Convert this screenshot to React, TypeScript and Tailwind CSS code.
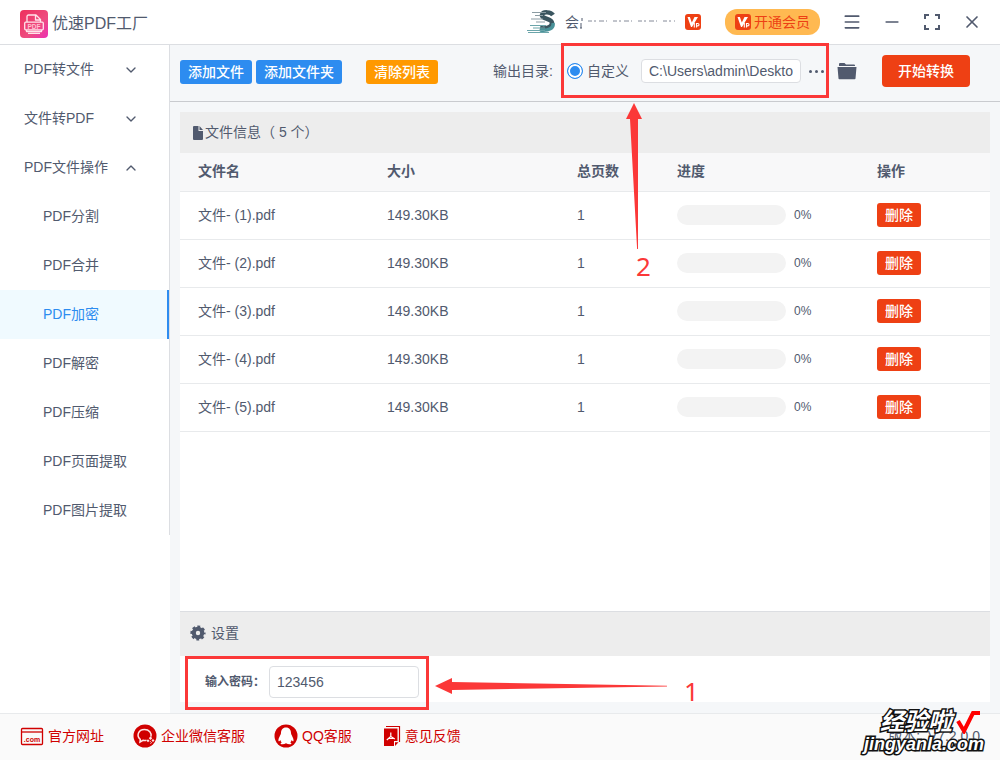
import React, { useState } from 'react';
import { ChevronDown, ChevronUp, Menu, Minus, X } from 'lucide-react';

interface FileItem {
  id: number;
  name: string;
  size: string;
  pages: number;
  progress: number;
}

const initialFiles: FileItem[] = [1, 2, 3, 4, 5].map(n => ({
  id: n,
  name: `文件- (${n}).pdf`,
  size: '149.30KB',
  pages: 1,
  progress: 0,
}));

const groups = [
  { label: 'PDF转文件', open: false },
  { label: '文件转PDF', open: false },
  { label: 'PDF文件操作', open: true },
];

const operations = ['PDF分割', 'PDF合并', 'PDF加密', 'PDF解密', 'PDF压缩', 'PDF页面提取', 'PDF图片提取'];

const Logo = () => (
  <svg className="w-7 h-7" viewBox="0 0 28 28" fill="none">
    <defs>
      <linearGradient id="logo" x1="0" y1="0" x2="1" y2="1">
        <stop offset="0" stopColor="#ee2f5b" />
        <stop offset="0.6" stopColor="#ee4c80" />
        <stop offset="1" stopColor="#ec2fb4" />
      </linearGradient>
    </defs>
    <rect width="28" height="28" rx="4" fill="url(#logo)" />
    <g stroke="#ffe3ea" strokeWidth="1.3" strokeLinejoin="round">
      <path d="M7 12V6.5A1.5 1.5 0 0 1 8.500 5H16l4.500 4.500V12M15.500 5v5h5" />
      <rect x="4.700" y="12.200" width="18.600" height="7.600" rx="1" />
      <path d="M6.500 20v1.500h15V20M8 23.300h12" />
    </g>
    <text x="14" y="18.700" textAnchor="middle" fontSize="6.500" fontWeight="700" fill="#ffc2d2" fontFamily="Liberation Sans">PDF</text>
  </svg>
);

const Avatar = () => (
  <svg className="w-7 h-6" viewBox="0 0 28 24" fill="none">
    <path d="M26 5c-2-3-10-4-11 0-1 4 10 3 10 8 0 5-7 6-12 5" stroke="#3b5660" strokeWidth="4.500" />
    <path d="M26 13c1 5-4 8-13 7" stroke="#4a9299" strokeWidth="3.500" />
    <path d="M5 2.500h14M8 5.500h8M4 9h12M9 12h9" stroke="#8b9ca3" strokeWidth="1.200" />
    <path d="M3 15.500h16M6 18h12M0 20.500h18M1 22.500h21" stroke="#6ba5aa" strokeWidth="1.200" />
  </svg>
);

const VipIcon = () => (
  <svg className="w-4 h-4 shrink-0" viewBox="0 0 16 16" fill="none">
    <rect width="16" height="16" rx="3" fill="#ee4014" />
    <path d="M2.500 3h2.400l1.900 5.500L9.500 3h3.500L7 13H6z" fill="#fff" />
    <path d="M9.300 9v4.500M11.500 13.500V9.500h1.300a1.200 1.200 0 0 1 0 2.400h-1.300" stroke="#fff" strokeWidth="1.100" />
  </svg>
);

const FullscreenIcon = () => (
  <svg className="w-4 h-4" viewBox="0 0 16 16" fill="none" stroke="currentColor" strokeWidth="2">
    <path d="M1 5V1h4M11 1h4v4M15 11v4h-4M5 15H1v-4" />
  </svg>
);

const FileIcon = () => (
  <svg className="w-3 h-3.5" viewBox="0 0 12 14" fill="currentColor">
    <path d="M2 0h4.500v5H11v8a1 1 0 0 1-1 1H2a1 1 0 0 1-1-1V1a1 1 0 0 1 1-1zM7.500 0 11 4H7.500z" />
  </svg>
);

const GearIcon = () => (
  <svg className="w-4 h-4" viewBox="0 0 16 16" fill="none" stroke="currentColor">
    <circle cx="8" cy="8" r="4.200" strokeWidth="4" />
    <circle cx="8" cy="8" r="6.400" strokeWidth="2.400" strokeDasharray="2.800 2.226" strokeDashoffset="1.400" />
  </svg>
);

const FolderIcon = () => (
  <svg className="w-5 h-[18px]" viewBox="0 0 20 18" fill="currentColor">
    <path d="M2 4V2a1 1 0 0 1 1-1h4.500l1.500 1.500h8a1 1 0 0 1 1 1V4z" />
    <path d="M.500 5h19L18.500 16.500a.8.8 0 0 1-.8.700H2.300a.8.8 0 0 1-.8-.700z" />
  </svg>
);

const SiteIcon = () => (
  <svg className="w-6 h-6" viewBox="0 0 24 24" fill="none" stroke="#d00000">
    <rect x="1.500" y="4.500" width="21" height="16" rx="1" strokeWidth="1.300" />
    <path d="M1.500 8h21" strokeWidth="1.300" />
    <text x="12" y="17.800" textAnchor="middle" fontSize="7" fontWeight="700" fill="#d00000" stroke="none" fontFamily="Liberation Sans">.com</text>
  </svg>
);

const WechatIcon = () => (
  <svg className="w-6 h-6" viewBox="0 0 24 24" fill="none">
    <circle cx="12" cy="12" r="11.500" fill="#d00000" />
    <path d="M13.500 16.200a8 8 0 0 1-3.500.1L7 18l.3-2.700C3.300 12.500 4.800 5.500 11.500 5.500c4.800 0 7.300 3.500 6.500 7" stroke="#ffe5e5" strokeWidth="1.500" />
    <path d="m17.500 12.300 1.700 1.900-1.700 1.900-1.700-1.900zM15 15.200l1.500 1.500-1.500 1.500-1.500-1.500zM20 15l1.500 1.500L20 18l-1.500-1.500z" fill="#ffe5e5" />
    <path d="m17 17.200 1.500 1.500-1 1" stroke="#ffe5e5" />
  </svg>
);

const QQIcon = () => (
  <svg className="w-6 h-6" viewBox="0 0 24 24" fill="none">
    <circle cx="12" cy="12" r="11.500" fill="#d00000" />
    <path d="M12 3.500c-3.500 0-5 2.500-5 5.500 0 2-3 5-2.500 8 .3 1 1.300-.3 1.800-1 .2 1 .7 1.800 1.400 2.400-1.200.4-1.700 1.600-.2 1.800 1.500.2 3.200-.1 4.500-.9 1.300.8 3 1.100 4.500.9 1.500-.2 1-1.400-.2-1.800.7-.6 1.200-1.400 1.400-2.400.5.7 1.500 2 1.800 1 .5-3-2.500-6-2.500-8 0-3-1.500-5.500-5-5.500z" fill="#fff" />
  </svg>
);

const FeedbackIcon = () => (
  <svg className="w-[18px] h-6" viewBox="0 0 18 24" fill="none">
    <path d="M3 2.500h13.500V18" stroke="#d00000" strokeWidth="1.200" />
    <path d="M1 4.500h13.500v12.500H11v5H1z" fill="#d00000" />
    <path d="M12 22v-3.800h3.500z" fill="#d00000" />
    <path d="M7.800 8.500v4l-4 3.500M7.800 12.500l4 2.500M5.500 14.500h5" stroke="#fff" strokeWidth="1.200" />
  </svg>
);

const footerLinks = [
  { label: '官方网址', icon: <SiteIcon />, gap: 'ml-5' },
  { label: '企业微信客服', icon: <WechatIcon />, gap: 'ml-7' },
  { label: 'QQ客服', icon: <QQIcon />, gap: 'ml-7' },
  { label: '意见反馈', icon: <FeedbackIcon />, gap: 'ml-[30px]' },
];

export default function App() {
  const [files, setFiles] = useState<FileItem[]>(initialFiles);
  const [active, setActive] = useState('PDF加密');
  const [password, setPassword] = useState('123456');
  const [outputDir, setOutputDir] = useState('C:\\Users\\admin\\Deskto');

  const removeFile = (id: number) => setFiles(files.filter(f => f.id !== id));

  return (
    <div className="min-h-screen flex flex-col overflow-hidden bg-[#f5f7f9] text-sm leading-[21px] text-[#515a6e] font-['Liberation_Sans','Noto_Sans_CJK_SC',sans-serif]">
      <header className="h-[45px] flex items-center justify-between pl-5 pr-[18px] bg-white border-b border-[#dcdee2]">
        <div className="flex items-center gap-1 pt-1">
          <Logo />
          <h1 className="text-base leading-6">优速PDF工厂</h1>
        </div>
        <div className="flex items-center">
          <Avatar />
          <div className="flex items-center mx-2.5">
            <span>会</span>
            {/* scrubbed account name */}
            <svg className="w-24 h-4" viewBox="0 0 96 16" fill="none" stroke="#515a6e">
              <path d="M3 4v3M2 9v5M1 14h2" />
              <path d="M9 7h87" strokeDasharray="4 2 2 3 5 2 1 6" opacity="0.7" />
            </svg>
          </div>
          <VipIcon />
          <button className="h-[26px] flex items-center gap-[3px] ml-6 px-2.5 rounded-xl bg-[#ffb951] text-[#ed4014]">
            <VipIcon />
            开通会员
          </button>
          <div className="flex items-center gap-5 ml-[22px]">
            <button aria-label="菜单"><Menu className="w-5 h-5" strokeWidth={2} /></button>
            <button aria-label="最小化"><Minus className="w-5 h-5" strokeWidth={2} /></button>
            <button aria-label="最大化" className="px-0.5"><FullscreenIcon /></button>
            <button aria-label="关闭"><X className="w-5 h-5" strokeWidth={2} /></button>
          </div>
        </div>
      </header>

      <div className="flex-1 flex">
        <aside className="w-[170px] shrink-0 bg-white">
          <nav className="border-r border-[#dcdee2]">
            {groups.map(g => (
              <button key={g.label} className="w-full h-[49px] flex items-center justify-between pl-6 pr-[30px]">
                {g.label}
                {g.open ? <ChevronUp className="w-4 h-4" strokeWidth={2} /> : <ChevronDown className="w-4 h-4" strokeWidth={2} />}
              </button>
            ))}
            {operations.map(name => (
              <button
                key={name}
                onClick={() => setActive(name)}
                className={`block w-full h-[49px] pl-[43px] text-left ${
                  active === name ? 'bg-[#f0faff] text-[#2d8cf0] border-r-2 border-[#2d8cf0]' : ''
                }`}
              >
                {name}
              </button>
            ))}
          </nav>
        </aside>

        <main className="flex-1 min-w-0 flex flex-col">
          <div className="h-[57px] flex items-center justify-between pl-2.5 pr-[30px] pb-1 border-b border-[#c9cbcf]">
            <div className="flex items-center gap-1 pt-0.5 text-white font-medium">
              <button className="h-6 px-2 rounded-[3px] bg-[#2d8cf0]">添加文件</button>
              <button className="h-6 px-2 rounded-[3px] bg-[#2d8cf0]">添加文件夹</button>
              <button className="h-6 px-2 ml-5 rounded-[3px] bg-[#ff9900]">清除列表</button>
            </div>
            <div className="flex items-center">
              <span>输出目录:</span>
              <div className="relative flex items-center ml-3.5">
                <label className="flex items-center gap-1">
                  <input
                    type="radio"
                    name="output"
                    defaultChecked
                    className="appearance-none w-4 h-4 rounded-full border border-[#2d8cf0] checked:bg-[#2d8cf0] shadow-[inset_0_0_0_2px_#ffffff]"
                  />
                  自定义
                </label>
                <input
                  aria-label="输出目录"
                  className="ml-3 w-[160px] h-6 px-[7px] rounded border border-[#dcdee2] bg-white outline-none"
                  value={outputDir}
                  onChange={(e) => setOutputDir(e.target.value)}
                />
                <button aria-label="更多" className="flex gap-[3px] ml-2 mr-[13px] py-2">
                  <i className="w-[3px] h-[3px] rounded-full bg-[#515a6e]" />
                  <i className="w-[3px] h-[3px] rounded-full bg-[#515a6e]" />
                  <i className="w-[3px] h-[3px] rounded-full bg-[#515a6e]" />
                </button>
                {/* step 2 callout */}
                <div className="absolute -left-1.5 right-2 -top-4 h-[55px] border-[3px] border-[#fb3838] pointer-events-none" />
                <svg className="absolute left-[59px] top-11 w-4 h-[146px] pointer-events-none" viewBox="0 0 16 146" fill="#fb3838">
                  <path d="M8 0 16 16h-4v130h-.900L4 16H0z" />
                </svg>
                <span className="absolute left-[69px] top-[191px] text-[26px] leading-8 text-[#fb3838] font-['Noto_Sans',sans-serif] pointer-events-none">2</span>
              </div>
              <button aria-label="打开文件夹"><FolderIcon /></button>
              <button className="w-[88px] h-8 ml-[25px] rounded bg-[#ee4014] text-white font-medium">开始转换</button>
            </div>
          </div>

          <div className="flex-1 flex flex-col px-2.5 pt-2.5 pb-[11px]">
            <section className="flex-1 bg-white">
              <h2 className="h-[41px] flex items-center gap-px pl-3 bg-[#ededed]"><FileIcon />文件信息（ 5 个）</h2>
              <table className="w-full table-fixed text-left">
                <thead className="bg-[#f8f8f9]">
                  <tr className="h-[38px] border-b border-[#e8eaec]">
                    <th className="w-[189px] pl-[18px]">文件名</th>
                    <th className="w-[190px] pl-[18px]">大小</th>
                    <th className="w-[100px] pl-[18px]">总页数</th>
                    <th className="w-[200px] pl-[18px]">进度</th>
                    <th className="pl-[18px]">操作</th>
                  </tr>
                </thead>
                <tbody>
                  {files.map(f => (
                    <tr key={f.id} className="h-12 border-b border-[#e8eaec]">
                      <td className="pl-[18px]">{f.name}</td>
                      <td className="pl-[18px]">{f.size}</td>
                      <td className="pl-[18px]">{f.pages}</td>
                      <td className="pl-[18px]">
                        <div className="flex items-center gap-2">
                          <div className="w-[109px] h-5 rounded-full bg-[#f3f3f3] overflow-hidden">
                            <div className="h-full bg-[#2d8cf0]" style={{ width: `${f.progress}%` }} />
                          </div>
                          <span className="text-xs">{f.progress}%</span>
                        </div>
                      </td>
                      <td className="pl-[18px]">
                        <button onClick={() => removeFile(f.id)} className="block h-6 px-2 rounded-[3px] bg-[#ee4014] text-white font-medium">删除</button>
                      </td>
                    </tr>
                  ))}
                </tbody>
              </table>
            </section>

            <section className="bg-white">
              <h2 className="h-[45px] flex items-center gap-[5px] pl-2.5 pb-0.5 bg-[#ededed] border-t border-[#dcdee2]"><GearIcon />设置</h2>
              <div className="flex pl-[25px] pt-2.5 pb-1">
                <div className="relative flex items-center">
                  <label htmlFor="password" className="w-16 text-xs font-bold whitespace-nowrap">输入密码：</label>
                  <input
                    id="password"
                    className="w-[150px] h-8 px-[7px] rounded border border-[#dcdee2] bg-white outline-none"
                    value={password}
                    onChange={(e) => setPassword(e.target.value)}
                  />
                  {/* step 1 callout */}
                  <div className="absolute -left-5 -right-2.5 -top-2.5 -bottom-3 border-[3px] border-[#fb3838] pointer-events-none" />
                  <svg className="absolute left-[230px] top-3 w-[232px] h-4 pointer-events-none" viewBox="0 0 232 16" fill="#fb3838">
                    <path d="M0 8 17 0v4l215 3.700v.800L17 12v4z" />
                  </svg>
                  <span className="absolute left-[479px] top-[9px] text-[26px] leading-8 text-[#fb3838] font-['Noto_Sans',sans-serif] pointer-events-none">1</span>
                </div>
              </div>
            </section>
          </div>
        </main>
      </div>

      <footer className="relative h-[47px] flex items-center pb-0.5 bg-[#fafafa] border-t border-[#e8eaec] text-[#d00000]">
        {footerLinks.map(l => (
          <a key={l.label} href="#" className={`flex items-center gap-1 ${l.gap} mr-px`}>
            {l.icon}
            {l.label}
          </a>
        ))}
        <div className="ml-auto pr-5 text-[#515a6e] whitespace-pre">版本:  V7.2.0.0</div>
        <div className="absolute right-4 -top-1.5 flex flex-col items-end font-bold italic text-white whitespace-nowrap [-webkit-text-stroke:3px_#111111] [paint-order:stroke_fill]">
          <div className="flex items-center gap-1 pr-1">
            <span className="text-2xl leading-7">经验啦</span>
            <svg className="w-6 h-6" viewBox="0 0 24 24" fill="none" stroke="#f00" strokeWidth="4">
              <path d="m2 11 6 10L17 3h7" />
            </svg>
          </div>
          <span className="text-lg leading-4">jingyanla.com</span>
        </div>
      </footer>
    </div>
  );
}
